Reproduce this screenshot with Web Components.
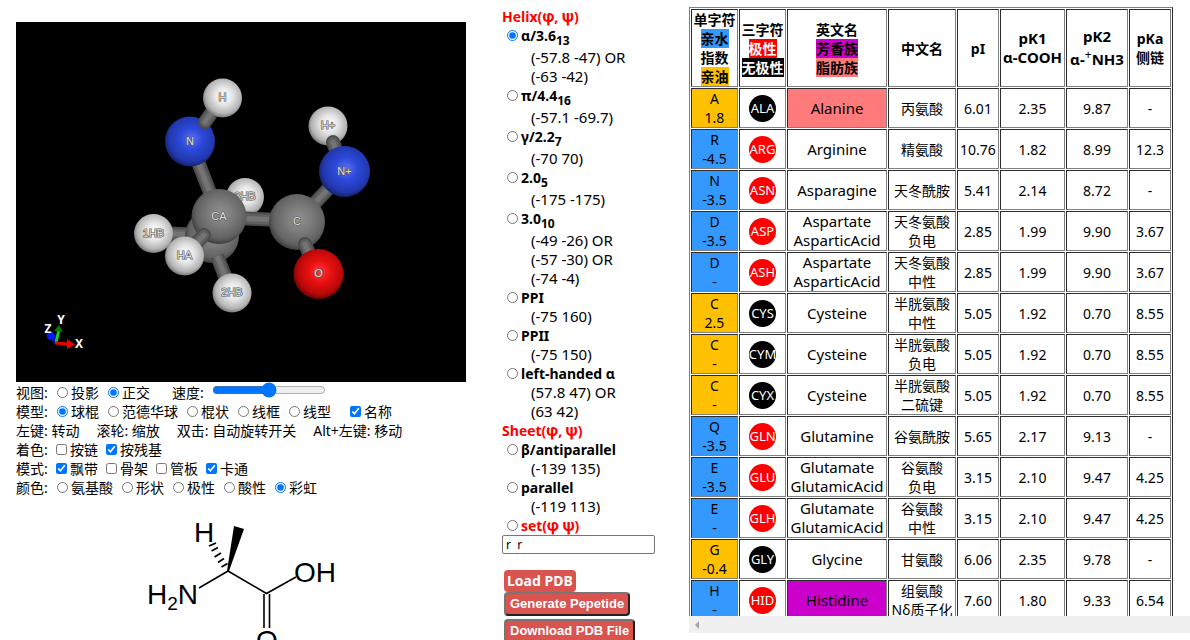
<!DOCTYPE html>
<html lang="zh-CN">
<head>
<meta charset="utf-8">
<title>Peptide Builder</title>
<style>
html, body { height: 100%; }
body { margin: 0; overflow: hidden; background: #fff; color: #000; font: 14px/19px "Noto Sans", "Noto Sans CJK SC", sans-serif; }
</style>
</head>
<body>
<peptide-app>
  <molecule-viewer slot="view"></molecule-viewer>
  <viewer-controls slot="view"></viewer-controls>
  <structure-formula slot="view"></structure-formula>
  <torsion-panel slot="torsion"></torsion-panel>
  <amino-table slot="table"></amino-table>
</peptide-app>

<script>
function define(name, html, setup) {
  const template = document.createElement('template');
  template.innerHTML = html;
  customElements.define(name, class extends HTMLElement {
    constructor() {
      super();
      this.attachShadow({ mode: 'open' }).append(template.content.cloneNode(true));
      if (setup) setup(this.shadowRoot);
    }
  });
}

/* Page frame: viewer, torsion presets, residue table */
define('peptide-app', `
<style>
:host { display: grid; grid-template-columns: 486fr 187fr 501fr; height: 100vh; overflow: hidden; padding-left: 16px; box-sizing: border-box; }
section { min-width: 0; min-height: 0; }
.view { padding: 22px 36px 0 0; }
.torsion { padding-top: 7px; }
.table { padding: 7px 0; }
</style>
<section class="view"><slot name="view"></slot></section>
<section class="torsion"><slot name="torsion"></slot></section>
<section class="table"><slot name="table"></slot></section>`);

/* Ball-and-stick scene */
const atom = (x, y, r, kind, label) => `<circle cx="${x}" cy="${y}" r="${r}" fill="url(#${kind})"/>` +
  (label ? `<text x="${x}" y="${y + 3}">${label}</text>` : '');
const bond = (x1, y1, x2, y2, cap = 'butt') =>
  `<g stroke-linecap="${cap}"><path d="M${x1} ${y1}L${x2} ${y2}" stroke="#4c4c4c" stroke-width="14"/>
   <path d="M${x1} ${y1}L${x2} ${y2}" stroke="#606060" stroke-width="10"/>
   <path d="M${x1} ${y1}L${x2} ${y2}" stroke="#747474" stroke-width="5"/></g>`;
const ball = (id, a, b, c, d) => `<radialGradient id="${id}" cx=".53" cy=".45" r=".56">
  <stop offset="0" stop-color="${a}"/><stop offset=".4" stop-color="${b}"/>
  <stop offset=".8" stop-color="${c}"/><stop offset="1" stop-color="${d}"/></radialGradient>`;

define('molecule-viewer', `
<style>
:host { display: block; background: #000; }
svg { display: block; width: 100%; height: auto; }
text { font: 11px "Liberation Sans", sans-serif; text-anchor: middle; fill: #ddd; stroke: #555; stroke-width: 1.2px; paint-order: stroke; }
.axis text { font: bold 12px "Noto Sans", sans-serif; stroke: none; fill: #fff; }
</style>
<svg viewBox="16 22 450 360" role="img" aria-label="Alanine">
<defs>
${ball('gh', '#ffffff', '#e6e6e6', '#b4b4b4', '#747474')}
${ball('gc', '#909090', '#7c7c7c', '#626262', '#3c3c3c')}
${ball('gn', '#5b70f4', '#2b48da', '#2238ae', '#142166')}
${ball('go', '#ff3838', '#e81010', '#b90808', '#6c0202')}
</defs>
${atom(245, 197, 19, 'gh', '3HB')}
${bond(153, 233, 212, 235)}
${atom(212, 236, 27, 'gc')}
${bond(217, 256, 229, 286)}
${bond(190, 141, 219, 216)}
${bond(219, 217, 297, 221)}
${bond(297, 222, 344, 172)}
${atom(153.5, 233.5, 19.5, 'gh', '1HB')}
${atom(190, 141.5, 25, 'gn', 'N')}
${bond(205, 122, 222, 98, 'round')}
${atom(222.5, 98, 19.5, 'gh', 'H')}
${atom(219, 216.5, 27.5, 'gc', 'CA')}
${bond(204, 235, 184, 256, 'round')}
${atom(184.5, 256, 19.5, 'gh', 'HA')}
${atom(232, 293, 19.5, 'gh', '2HB')}
${atom(328, 126, 19.5, 'gh', 'H+')}
${bond(333, 142, 344, 172, 'round')}
${atom(344.5, 171.5, 25.5, 'gn', 'N+')}
${atom(297, 222, 28, 'gc', 'C')}
${bond(305, 244, 318, 274, 'round')}
${atom(318.5, 274, 25, 'go', 'O')}
<g class="axis">
  <path d="M50 335L56 343" stroke="#0010a0" stroke-width="4"/><circle cx="51" cy="336" r="4" fill="#0a14ff"/>
  <path d="M56 342L59 330" stroke="#0ad80a" stroke-width="3"/><path d="M59 325L63 332L54 331Z" fill="#087808"/>
  <path d="M55 343L69 344" stroke="#e60000" stroke-width="3"/><path d="M67 339L75 344.500L67 349Z" fill="#f00000"/>
  <text x="61" y="324">Y</text><text x="48" y="333">Z</text><text x="79" y="348">X</text>
</g>
</svg>`);

/* Display options below the scene */
const choice = (type, group) => ([text, on]) =>
  `<label><input type="${type}" name="${group}"${on ? ' checked' : ''}>${text}</label>`;
const choices = (type, group, items) => items.map(choice(type, group)).join('');

define('viewer-controls', `
<style>
:host { display: block; padding: 1px 0; }
div { display: flex; gap: 9px; height: 19px; align-items: center; white-space: nowrap; }
div.boxes { gap: 8px; }
div.hints { gap: 17px; }
b { font-weight: normal; min-width: 32px; }
label { display: flex; align-items: center; gap: 3px; }
label.apart { margin-left: 13px; gap: 8px; }
label.near { margin-left: 10px; }
input { margin: 0; width: 11px; height: 11px; accent-color: #0075ff; }
input[type=range] { width: 114px; height: 14px; align-self: flex-start; }
</style>
<div><b>视图:</b>${choices('radio', 'view', [['投影'], ['正交', 1]])}<label class="apart">速度: <input type="range" value="50"></label></div>
<div><b>模型:</b>${choices('radio', 'model', [['球棍', 1], ['范德华球'], ['棍状'], ['线框'], ['线型']])}<label class="near"><input type="checkbox" checked>名称</label></div>
<div class="hints"><span>左键: 转动</span><span>滚轮: 缩放</span><span>双击: 自动旋转开关</span><span>Alt+左键: 移动</span></div>
<div class="boxes"><b>着色:</b>${choices('checkbox', 'tint', [['按链'], ['按残基', 1]])}</div>
<div class="boxes"><b>模式:</b>${choices('checkbox', 'mode', [['飘带', 1], ['骨架'], ['管板'], ['卡通', 1]])}</div>
<div><b>颜色:</b>${choices('radio', 'colour', [['氨基酸'], ['形状'], ['极性'], ['酸性'], ['彩虹', 1]])}</div>`);

/* Skeletal formula */
define('structure-formula', `
<style>
:host { display: block; }
svg { display: block; width: 100%; height: auto; }
text { font: 28px "Liberation Sans", sans-serif; }
.sub { font-size: 19px; }
</style>
<svg viewBox="16 498 450 172" role="img" aria-label="Alanine formula">
<text x="194" y="542">H</text>
<text x="147" y="604">H<tspan class="sub" dy="6">2</tspan><tspan dy="-6">N</tspan></text>
<text x="294" y="582">OH</text>
<text x="256" y="650">O</text>
<g fill="none" stroke="#000" stroke-width="1.600">
<path d="M199 588L228 571L266.500 593.500L296 577M264 594V628M269.500 594V628"/>
<path stroke-width="1.800" d="M209 546L216 543M211.500 551L218 547.500M214.500 557L221 553M218 562.500L224 558.500M221.500 567L227.500 563.500"/>
</g>
<path d="M227 571L234 526L244 529L229 571Z"/>
</svg>`);

/* Torsion presets and PDB actions */
const preset = (name, sub, values, on) =>
  `<label class="${sub ? 'tall' : ''}"><input type="radio" name="fold"${on ? ' checked' : ''}><b>${name}${sub ? `<sub>${sub}</sub>` : ''}</b></label>` +
  values.map(v => `<p>${v}</p>`).join('');

define('torsion-panel', `
<style>
:host { display: block; white-space: nowrap; }
h2 { margin: 0; font-size: 14px; line-height: 19px; color: #f00; }
h2, .red { font-family: "Open Sans", "Noto Sans", sans-serif; }
h2 span, .red span { font-family: Roboto, sans-serif; font-size: 16px; line-height: 0; }
label { display: flex; gap: 3px; height: 19px; padding-left: 5px; }
label.tall { height: 22px; }
label input { margin: 4px 0 0; width: 11px; height: 11px; accent-color: #0075ff; }
sub { font-size: 12px; line-height: 0; }
p { margin: 0 0 0 29px; font-size: 15px; line-height: 19px; }
.red { color: #f00; }
input.angles { display: block; box-sizing: border-box; width: 153px; height: 19px; margin: 0 0 16px; padding: 0 3px; border: 1px solid #767676; border-radius: 2px; font: 12px "Noto Sans", sans-serif; }
.actions { display: flex; flex-direction: column; align-items: flex-start; padding-left: 2px; }
button { box-sizing: border-box; height: 24px; margin: 0 0 3px; padding: 0 4px; border: 2px solid; border-color: #767676 #222 #222 #767676; border-radius: 4px; background: #d9534f; color: #fff; font: bold 13px/16px "Liberation Sans", sans-serif; }
button.load { height: 22px; margin: 0; padding: 0 3px; border: 0; font-family: "Noto Sans", sans-serif; font-size: 14px; }
</style>
<h2>Helix(<span>φ</span>, <span>ψ</span>)</h2>
${preset('α/3.6', '13', ['(-57.8 -47) OR', '(-63 -42)'], 1)}
${preset('π/4.4', '16', ['(-57.1 -69.7)'])}
${preset('γ/2.2', '7', ['(-70 70)'])}
${preset('2.0', '5', ['(-175 -175)'])}
${preset('3.0', '10', ['(-49 -26) OR', '(-57 -30) OR', '(-74 -4)'])}
${preset('PPI', '', ['(-75 160)'])}
${preset('PPII', '', ['(-75 150)'])}
${preset('left-handed α', '', ['(57.8 47) OR', '(63 42)'])}
<h2>Sheet(<span>φ</span>, <span>ψ</span>)</h2>
${preset('β/antiparallel', '', ['(-139 135)'])}
${preset('parallel', '', ['(-119 113)'])}
${preset('<span class="red">set(<span>φ</span> <span>ψ</span>)</span>', '', [])}
<input class="angles" type="text" value="r  r" aria-label="φ ψ">
<div class="actions">
<button class="load" type="button">Load PDB</button>
<button type="button">Generate Pepetide</button>
<button type="button">Download PDB File</button>
</div>`);

/* Round three-letter residue badge */
define('residue-badge', `
<style>
:host { display: flex; align-items: center; justify-content: center; width: 27px; height: 27px; margin: 0 auto; border-radius: 50%; background: #f00; color: #fff; font-size: 13px; }
:host([apolar]) { background: #000; }
</style><slot></slot>`);

const residues = [
  ['A', '1.8', 'oil', 'ALA', 1, 'Alanine', '丙氨酸', '6.01', '2.35', '9.87', '-', 'aliphatic'],
  ['R', '-4.5', 'water', 'ARG', 0, 'Arginine', '精氨酸', '10.76', '1.82', '8.99', '12.3'],
  ['N', '-3.5', 'water', 'ASN', 0, 'Asparagine', '天冬酰胺', '5.41', '2.14', '8.72', '-'],
  ['D', '-3.5', 'water', 'ASP', 0, 'Aspartate<br>AsparticAcid', '天冬氨酸<br>负电', '2.85', '1.99', '9.90', '3.67'],
  ['D', '-', 'water', 'ASH', 0, 'Aspartate<br>AsparticAcid', '天冬氨酸<br>中性', '2.85', '1.99', '9.90', '3.67'],
  ['C', '2.5', 'oil', 'CYS', 1, 'Cysteine', '半胱氨酸<br>中性', '5.05', '1.92', '0.70', '8.55'],
  ['C', '-', 'oil', 'CYM', 1, 'Cysteine', '半胱氨酸<br>负电', '5.05', '1.92', '0.70', '8.55'],
  ['C', '-', 'oil', 'CYX', 1, 'Cysteine', '半胱氨酸<br>二硫键', '5.05', '1.92', '0.70', '8.55'],
  ['Q', '-3.5', 'water', 'GLN', 0, 'Glutamine', '谷氨酰胺', '5.65', '2.17', '9.13', '-'],
  ['E', '-3.5', 'water', 'GLU', 0, 'Glutamate<br>GlutamicAcid', '谷氨酸<br>负电', '3.15', '2.10', '9.47', '4.25'],
  ['E', '-', 'water', 'GLH', 0, 'Glutamate<br>GlutamicAcid', '谷氨酸<br>中性', '3.15', '2.10', '9.47', '4.25'],
  ['G', '-0.4', 'oil', 'GLY', 1, 'Glycine', '甘氨酸', '6.06', '2.35', '9.78', '-'],
  ['H', '-', 'water', 'HID', 0, 'Histidine', '组氨酸<br>Nδ质子化', '7.60', '1.80', '9.33', '6.54', 'aromatic']
];

define('amino-table', `
<style>
:host { display: flex; flex-direction: column; height: 100%; }
.clip { flex: 1; min-height: 0; overflow: hidden; }
table { table-layout: fixed; width: 484px; border: 1px solid; border-color: #808080 #2c2c2c #2c2c2c #808080; border-spacing: 1px; text-align: center; }
th, td { padding: 0; border: 1px solid; border-color: #2c2c2c #808080 #808080 #2c2c2c; white-space: nowrap; }
td { height: 38px; }
td.name, th.pk { font-size: 15px; }
mark { display: inline-block; height: 19px; color: #000; background: none; }
.water { background: #3399ff; }
.oil { background: #ffc000; }
.polar { background: #f00; color: #fff; }
.apolar { background: #000; color: #fff; }
.aromatic { background: #cc00cc; }
.aliphatic { background: #ff7b7b; }
sup { font-size: 12px; line-height: 17px; font-weight: normal; }
.bar { display: flex; align-items: center; height: 17px; background: #f0f0f0; }
.bar svg { margin-left: 5px; width: 6px; height: 8px; }
</style>
<div class="clip"><table>
<colgroup><col style="width:47px"><col style="width:47px"><col style="width:100px"><col style="width:68px"><col style="width:42px"><col style="width:65px"><col style="width:62px"><col style="width:42px"></colgroup>
<thead><tr>
<th>单字符<br><mark class="water">亲水</mark><br>指数<br><mark class="oil">亲油</mark></th>
<th>三字符<br><mark class="polar">极性</mark><br><mark class="apolar">无极性</mark></th>
<th>英文名<br><mark class="aromatic">芳香族</mark><br><mark class="aliphatic">脂肪族</mark></th>
<th>中文名</th><th>pI</th><th class="pk">pK1<br>α-COOH</th><th class="pk">pK2<br>α-<sup>+</sup>NH3</th><th>pKa<br>侧链</th>
</tr></thead>
<tbody></tbody>
</table></div>
<div class="bar"><svg viewBox="0 0 6 8"><path d="M5 0V8L1 4Z" fill="#a3a3a3"/></svg></div>`, root => {
  root.querySelector('tbody').innerHTML = residues.map(r => `<tr>
<td class="${r[2]}">${r[0]}<br>${r[1]}</td>
<td><residue-badge${r[4] ? ' apolar' : ''}>${r[3]}</residue-badge></td>
<td class="name ${r[11] || ''}">${r[5]}</td>
${r.slice(6, 11).map(v => `<td>${v}</td>`).join('')}</tr>`).join('');
});
</script>
</body>
</html>
